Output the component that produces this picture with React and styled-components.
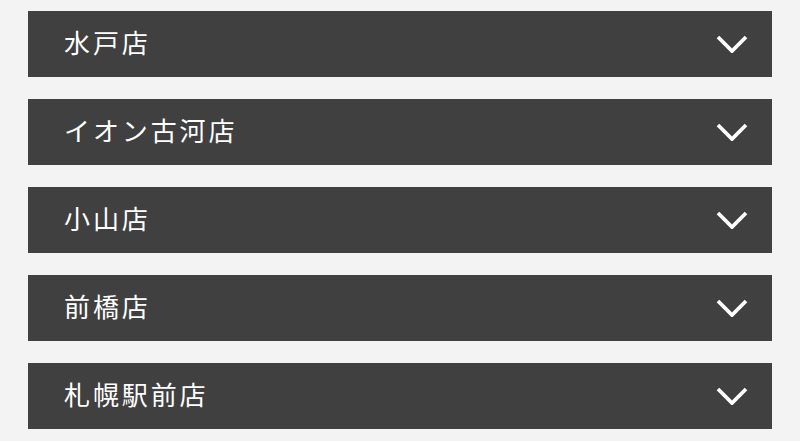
import React from "react";
import styled, { createGlobalStyle } from "styled-components";

const GlobalStyle = createGlobalStyle`
  html, body {
    margin: 0;
    padding: 0;
    background: #f3f3f3;
  }
`;

const shops = ["水戸店", "イオン古河店", "小山店", "前橋店", "札幌駅前店"];

const Chevron = () => (
  <svg width="32" height="18" viewBox="0 0 32 18" fill="none">
    <path d="M2 2 L16 16 L30 2" stroke="#fff" strokeWidth="3.8" strokeLinecap="butt" strokeLinejoin="miter" />
  </svg>
);

const App = () => {
  return (
    <>
      <GlobalStyle />
      <List>
        {shops.map((name) => (
          <Bar key={name}>
            <Name>{name}</Name>
            <Toggle>
              <Chevron />
            </Toggle>
          </Bar>
        ))}
      </List>
    </>
  );
};

export default App;

const List = styled.div`
  display: flex;
  flex-direction: column;
  gap: 22px;
  padding: 11px 28px;
`;

const Bar = styled.div`
  display: flex;
  align-items: center;
  justify-content: space-between;
  height: 66px;
  padding: 0 24px 0 36px;
  background: #404040;
  color: #fff;
  box-sizing: border-box;
`;

const Name = styled.span`
  font-family: "Noto Sans CJK JP", "Noto Sans", sans-serif;
  font-size: 26px;
  letter-spacing: 2.9px;
  line-height: 1;
  margin-top: -4px;
`;

const Toggle = styled.span`
  display: flex;
  align-items: center;
  margin-top: -1px;
`;
